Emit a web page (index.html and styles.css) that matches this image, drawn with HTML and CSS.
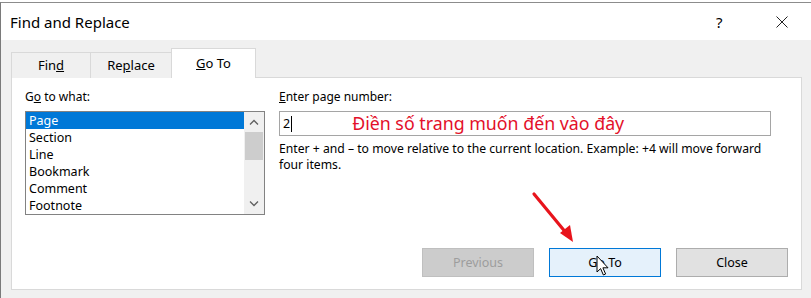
FILE: index.html
```html
<!DOCTYPE html>
<html lang="vi">
<head>
  <meta charset="UTF-8">
  <title>Find and Replace</title>
  <link rel="stylesheet" href="styles.css">
</head>
<body>

  <div class="dialog">
    <div class="titlebar">
      <span class="title">Find and Replace</span>
      <span class="help">?</span>
      <span class="close">
        <svg width="12" height="12" viewBox="0 0 12 12"><path d="M0.5 0.5 L11.5 11.5 M11.5 0.5 L0.5 11.5" stroke="#222" stroke-width="1" fill="none"/></svg>
      </span>
    </div>

    <div class="content">
      <div class="tabs">
        <div class="tab">Fin<u>d</u></div>
        <div class="tab">Re<u>p</u>lace</div>
        <div class="tab active"><u>G</u>o To</div>
      </div>

      <div class="panel">
        <div class="fields">
          <div class="col-left">
            <div class="label">G<u>o</u> to what:</div>
            <div class="listbox">
              <ul class="items">
                <li class="selected">Page</li>
                <li>Section</li>
                <li>Line</li>
                <li>Bookmark</li>
                <li>Comment</li>
                <li>Footnote</li>
              </ul>
              <div class="scrollbar">
                <div class="sb-btn">
                  <svg width="10" height="6" viewBox="0 0 10 6"><path d="M1 5.5 L5 1.5 L9 5.5" stroke="#606060" stroke-width="1.3" fill="none"/></svg>
                </div>
                <div class="sb-track"><div class="sb-thumb"></div></div>
                <div class="sb-btn">
                  <svg width="10" height="6" viewBox="0 0 10 6"><path d="M1 0.5 L5 4.5 L9 0.5" stroke="#606060" stroke-width="1.3" fill="none"/></svg>
                </div>
              </div>
            </div>
          </div>

          <div class="col-right">
            <div class="label"><u>E</u>nter page number:</div>
            <div class="input">
              <span class="value">2</span><span class="caret"></span>
              <span class="note">Điền số trang muốn đến vào đây</span>
            </div>
            <p class="hint">Enter + and – to move relative to the current location. Example: +4 will move forward four items.</p>
          </div>
        </div>

        <div class="actions">
          <button class="btn btn-disabled">Previous</button>
          <button class="btn btn-focus">Go To</button>
          <button class="btn">Close</button>
        </div>
      </div>
    </div>

    <!-- red annotation arrow -->
    <svg class="arrow" width="50" height="56" viewBox="0 0 50 56">
      <path d="M3 3 L36 43" stroke="#e8141c" stroke-width="3.2" stroke-linecap="round"/>
      <path d="M42 51 L29 42 L39 34 Z" fill="#e8141c"/>
    </svg>

    <!-- mouse pointer -->
    <svg class="cursor" width="14" height="22" viewBox="0 0 14 22">
      <path d="M1 1 L1 17 L4.6 13.6 L7.4 20 L9.6 19 L6.9 12.8 L12 12.8 Z" fill="#fff" stroke="#000" stroke-width="1" stroke-linejoin="round"/>
    </svg>
  </div>

</body>
</html>
```

FILE: styles.css
```css
html, body {
  margin: 0;
  background: #fff;
}

body {
  font-family: "Segoe UI", "Noto Sans", sans-serif;
  font-size: 12px;
  color: #000;
}

.dialog {
  position: relative;
  margin-top: 2px;
  height: 296px;
  border-top: 1px solid #8c8c8c;
  border-left: 1px solid #7a7a7a;
  background: #f0f0f0;
  box-sizing: border-box;
  overflow: hidden;
}

.titlebar {
  display: flex;
  align-items: center;
  height: 37px;
  background: #fff;
  padding-left: 9px;
}

.title {
  font-size: 15px;
  flex: 1;
}

.help {
  font-size: 15px;
  width: 14px;
  margin-right: 46px;
}

.close {
  display: flex;
  margin-right: 23px;
}

.content {
  padding: 8px 9px 0 10px;
}

.tabs {
  display: flex;
  align-items: flex-end;
  margin-bottom: -1px;
  position: relative;
  z-index: 1;
}

.tab {
  height: 25px;
  line-height: 25px;
  text-align: center;
  border: 1px solid #d9d9d9;
  border-bottom: none;
  background: #f0f0f0;
  font-size: 13px;
  width: 78px;
}

.tab + .tab {
  border-left: none;
}

.tab:nth-child(2) {
  width: 80px;
}

.tab.active {
  height: 29px;
  line-height: 28px;
  width: 83px;
  background: #fff;
  border-left: 1px solid #d9d9d9;
  margin-left: -1px;
}

.panel {
  display: flex;
  flex-direction: column;
  height: 213px;
  box-sizing: border-box;
  border: 1px solid #d9d9d9;
  background: #fff;
  padding: 11px 13px 12px 13px;
}

.fields {
  display: flex;
  gap: 14px;
}

.col-left {
  width: 240px;
}

.col-right {
  width: 492px;
}

.label {
  line-height: 16px;
  margin-bottom: 6px;
  font-size: 12px;
}

.listbox {
  display: flex;
  height: 104px;
  box-sizing: border-box;
  border: 1px solid #828282;
}

.items {
  list-style: none;
  margin: 0;
  padding: 0;
  flex: 1;
}

.items li {
  height: 17px;
  line-height: 17px;
  padding-left: 3px;
  font-size: 12.5px;
}

.items li.selected {
  background: #0078d7;
  color: #fff;
}

.scrollbar {
  width: 20px;
  display: flex;
  flex-direction: column;
  background: #f0f0f0;
}

.sb-btn {
  height: 20px;
  display: flex;
  align-items: center;
  justify-content: center;
}

.sb-track {
  flex: 1;
  padding: 0 1px;
}

.sb-thumb {
  height: 28px;
  background: #cdcdcd;
}

.input {
  position: relative;
  display: flex;
  align-items: center;
  height: 25px;
  box-sizing: border-box;
  border: 1px solid #a5a5a5;
  padding-left: 3px;
}

.value {
  font-size: 12.5px;
}

.caret {
  width: 1px;
  height: 16px;
  background: #000;
  margin-left: 1px;
}

.note {
  margin-left: 60px;
  color: #e3102a;
  font-size: 17.8px;
  padding-bottom: 1px;
}

.hint {
  margin: 5px 0 0;
  line-height: 16px;
  font-size: 12.2px;
}

.actions {
  margin-top: auto;
  display: flex;
  justify-content: flex-end;
  gap: 15px;
}

.btn {
  width: 112px;
  height: 29px;
  font-family: inherit;
  font-size: 12.5px;
  background: #e1e1e1;
  border: 1px solid #adadad;
  color: #000;
  padding: 0;
}

.btn-disabled {
  background: #cccccc;
  border-color: #bfbfbf;
  color: #9d9d9d;
}

.btn-focus {
  background: #e5f1fb;
  border-color: #0078d7;
}

.arrow {
  position: absolute;
  left: 530px;
  top: 188px;
}

.cursor {
  position: absolute;
  left: 595px;
  top: 252px;
}
```
